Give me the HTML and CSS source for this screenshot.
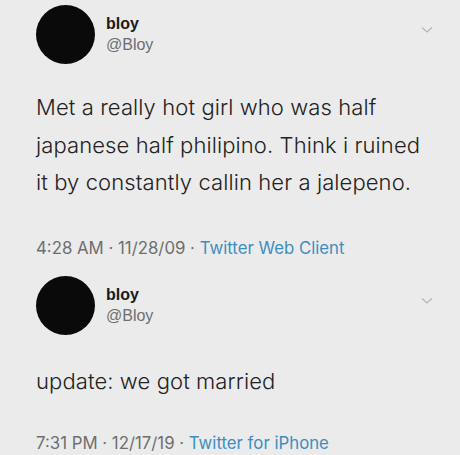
FILE: index.html
```html
<!DOCTYPE html>
<html>
<head>
<meta charset="utf-8">
<link rel="stylesheet" href="styles.css">
</head>
<body>
<div class="page">
  <article class="tweet first">
    <header class="head">
      <div class="avatar"></div>
      <div class="names">
        <div class="name">bloy</div>
        <div class="handle">@Bloy</div>
      </div>
      <svg class="chev" width="12" height="8" viewBox="0 0 12 8"><path d="M1 1.5 L6 6 L11 1.5" fill="none" stroke="#b5b5b5" stroke-width="1.2"/></svg>
    </header>
    <p class="text">Met a really hot girl who was half japanese half philipino. Think i ruined it by constantly callin her a jalepeno.</p>
    <div class="meta">4:28 AM · 11/28/09 · <span class="src">Twitter Web Client</span></div>
  </article>
  <article class="tweet second">
    <header class="head">
      <div class="avatar"></div>
      <div class="names">
        <div class="name">bloy</div>
        <div class="handle">@Bloy</div>
      </div>
      <svg class="chev" width="12" height="8" viewBox="0 0 12 8"><path d="M1 1.5 L6 6 L11 1.5" fill="none" stroke="#b5b5b5" stroke-width="1.2"/></svg>
    </header>
    <p class="text">update: we got married</p>
    <div class="meta">7:31 PM · 12/17/19 · <span class="src">Twitter for iPhone</span></div>
  </article>
</div>
</body>
</html>
```
FILE: styles.css
```css
html, body {
  margin: 0;
  padding: 0;
  background: #ebebeb;
}
.page {
  width: 460px;
  height: 455px;
  font-family: Inter, "Liberation Sans", Arial, sans-serif;
  color: #222;
  padding: 5px 0 0 36px;
  box-sizing: border-box;
  overflow: hidden;
}
.head {
  display: flex;
  align-items: flex-start;
}
.avatar {
  width: 59px;
  height: 59px;
  border-radius: 50%;
  background: #0a0a0a;
  flex: none;
}
.names {
  margin-left: 11px;
  padding-top: 8px;
  font-family: "Liberation Sans", Arial, sans-serif;
}
.name {
  font-weight: bold;
  font-size: 16px;
  line-height: 22px;
  color: #1a1a1a;
}
.handle {
  font-size: 16px;
  line-height: 20px;
  color: #6e6e6e;
}
.chev {
  margin-left: auto;
  margin-right: 27px;
  margin-top: 21px;
}
.text {
  margin: 0;
  font-size: 22px;
  line-height: 37.5px;
  font-weight: 300;
  letter-spacing: 0.1px;
  color: #222;
  width: 394px;
}
.first .text {
  margin-top: 25px;
}
.meta {
  font-size: 16.8px;
  line-height: 20px;
  color: #6e6e6e;
}
.first .meta {
  margin-top: 36px;
}
.src {
  color: #3d8ec0;
}
.second {
  margin-top: 18px;
}
.second .text {
  margin-top: 28px;
}
.second .meta {
  margin-top: 33px;
}
```
